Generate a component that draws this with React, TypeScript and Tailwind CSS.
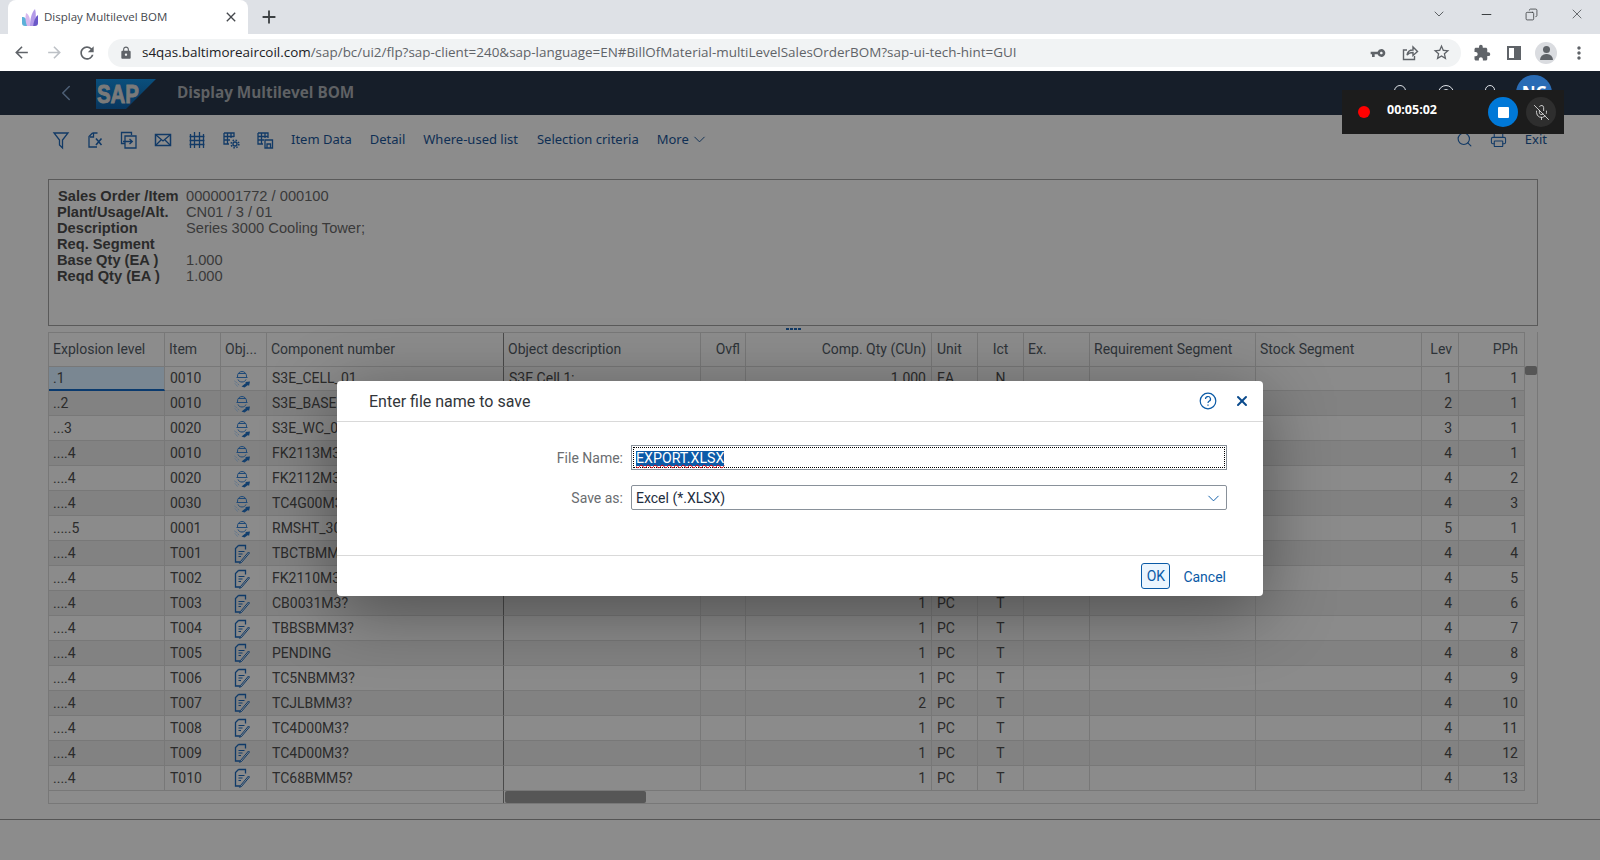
import React from "react";
import { MdArrowBack, MdArrowForward, MdRefresh, MdLock, MdVpnKey, MdExtension, MdStarBorder, MdMoreVert, MdClose, MdAdd } from "react-icons/md";
import { ChevronDown, ChevronLeft, Search, Printer, MicOff, Minus, Copy, X } from "lucide-react";

type Row = {
  level: string;
  item: string;
  kind: "assembly" | "note";
  comp: string;
  desc?: string;
  qty?: string;
  unit?: string;
  ict?: string;
  lev: string;
  pph: string;
};

const rows: Row[] = [
  { level: ".1", item: "0010", kind: "assembly", comp: "S3E_CELL_01", desc: "S3E Cell 1;", qty: "1.000", unit: "EA", ict: "N", lev: "1", pph: "1" },
  { level: "..2", item: "0010", kind: "assembly", comp: "S3E_BASE", lev: "2", pph: "1" },
  { level: "...3", item: "0020", kind: "assembly", comp: "S3E_WC_0", lev: "3", pph: "1" },
  { level: "....4", item: "0010", kind: "assembly", comp: "FK2113M3", lev: "4", pph: "1" },
  { level: "....4", item: "0020", kind: "assembly", comp: "FK2112M3", lev: "4", pph: "2" },
  { level: "....4", item: "0030", kind: "assembly", comp: "TC4G00M3", lev: "4", pph: "3" },
  { level: ".....5", item: "0001", kind: "assembly", comp: "RMSHT_30", lev: "5", pph: "1" },
  { level: "....4", item: "T001", kind: "note", comp: "TBCTBMM3", lev: "4", pph: "4" },
  { level: "....4", item: "T002", kind: "note", comp: "FK2110M3", lev: "4", pph: "5" },
  { level: "....4", item: "T003", kind: "note", comp: "CB0031M3?", qty: "1", unit: "PC", ict: "T", lev: "4", pph: "6" },
  { level: "....4", item: "T004", kind: "note", comp: "TBBSBMM3?", qty: "1", unit: "PC", ict: "T", lev: "4", pph: "7" },
  { level: "....4", item: "T005", kind: "note", comp: "PENDING", qty: "1", unit: "PC", ict: "T", lev: "4", pph: "8" },
  { level: "....4", item: "T006", kind: "note", comp: "TC5NBMM3?", qty: "1", unit: "PC", ict: "T", lev: "4", pph: "9" },
  { level: "....4", item: "T007", kind: "note", comp: "TCJLBMM3?", qty: "2", unit: "PC", ict: "T", lev: "4", pph: "10" },
  { level: "....4", item: "T008", kind: "note", comp: "TC4D00M3?", qty: "1", unit: "PC", ict: "T", lev: "4", pph: "11" },
  { level: "....4", item: "T009", kind: "note", comp: "TC4D00M3?", qty: "1", unit: "PC", ict: "T", lev: "4", pph: "12" },
  { level: "....4", item: "T010", kind: "note", comp: "TC68BMM5?", qty: "1", unit: "PC", ict: "T", lev: "4", pph: "13" },
];

const headers = [
  { label: "Explosion level", cls: "pl-[4px]" },
  { label: "Item", cls: "pl-[4px]" },
  { label: "Obj...", cls: "pl-[4px]" },
  { label: "Component number", cls: "pl-[4px] border-r-[#4a4a4a]" },
  { label: "Object description", cls: "pl-[4px]" },
  { label: "Ovfl", cls: "justify-end pr-[5px]" },
  { label: "Comp. Qty (CUn)", cls: "justify-end pr-[5px]" },
  { label: "Unit", cls: "pl-[5px]" },
  { label: "Ict", cls: "justify-center" },
  { label: "Ex.", cls: "pl-[4px]" },
  { label: "Requirement Segment", cls: "pl-[4px]" },
  { label: "Stock Segment", cls: "pl-[4px]" },
  { label: "Lev", cls: "justify-end pr-[6px]" },
  { label: "PPh", cls: "justify-end pr-[6px]" },
];

const gridCols = "grid grid-cols-[116px_56px_46px_237px_197px_45px_186px_46px_46px_66px_166px_166px_37px_66px]";
const cellBase = "flex items-center overflow-hidden whitespace-nowrap border-r border-b border-[#787878] pt-[1px]";

// helmet over a gear, with a small arrow at the lower right
const AssemblyIcon = () => (
  <svg width="18" height="18" viewBox="0 0 18 18" fill="none" stroke="#1f4a78" strokeWidth="1">
    <path d="M4.500 7.500V6a4.500 4.500 0 0 1 9 0v1.500" />
    <path d="M3.500 7.500h11M5 3.500h8" />
    <path d="M5 9.500c.5 1.500 2 2.500 4 2.500s3.500-1 4-2.500" />
    <path d="M1.500 11l2.500 1.800 2.500 3M2 13.500l2.500 3" stroke="#54708e" strokeDasharray="1.400 1" />
    <path d="M8.500 16.500l4.500-3.500-.8-1 4.800-.5-1 4.500-1-1-3.500 2.500z" fill="#123f6e" stroke="none" />
  </svg>
);

const NoteIcon = () => (
  <svg width="16" height="20" viewBox="0 0 16 20" fill="none" stroke="#0f3a68" strokeWidth="1.300">
    <path d="M4.500 1.500h7v4M4.500 1.500L1.500 4.500v13.500h6" />
    <path d="M4.500 7.500h6M4.500 10h4M4.500 12.500h2.500" strokeWidth="1" />
    <path d="M6.500 17.500l8-9.500 1 1-8 9.500-2 .8z" strokeWidth="1" fill="#8c8c8c" />
  </svg>
);

const ShareIcon = () => (
  <svg width="18" height="18" viewBox="0 0 18 18" fill="none" stroke="#5f6368" strokeWidth="1.400">
    <path d="M6 6H2.500v9.500h11V12" />
    <path d="M6 11c.5-3.500 3-5 6-5V3l4.500 4.500L12 11.500V8.500c-2.500 0-4.500.5-6 2.500z" />
  </svg>
);

const Favicon = () => (
  <svg width="16" height="17" viewBox="0 0 16 17">
    <path d="M0 8c3 0 5 2 5 5v4H3a3 3 0 0 1-3-3z" fill="#5cb0d8" />
    <path d="M4 4c3 1.500 4.500 5 4 13H5c-1.500-4-2-8-1-13z" fill="#d7b8ee" />
    <path d="M13 0c1.500 5 1 12-2 17H8c0-7 1.500-13 5-17z" fill="#b39ae8" />
    <path d="M16 6v8a3 3 0 0 1-3 3h-2c1-5 2-9 5-11z" fill="#6a58c8" />
  </svg>
);

const SapLogo = () => (
  <svg width="60" height="30" viewBox="0 0 60 30">
    <defs>
      <linearGradient id="sapBlue" x1="0" y1="0" x2="0" y2="1">
        <stop offset="0" stopColor="#0a4f7c" />
        <stop offset="1" stopColor="#08365e" />
      </linearGradient>
    </defs>
    <polygon points="0,0 60,0 30,30 0,30" fill="url(#sapBlue)" />
    <text x="1" y="24" fontFamily="Liberation Sans, sans-serif" fontWeight="700" fontSize="26" textLength="42" lengthAdjust="spacingAndGlyphs" fill="#7a7a7a" stroke="#7a7a7a" strokeWidth="1">SAP</text>
  </svg>
);

const toolIcon = { width: 20, height: 20, viewBox: "0 0 20 20", fill: "none", stroke: "#123a66", strokeWidth: 1.300 };

const toolbarIcons = [
  <svg key="filter" {...toolIcon}><path d="M3 3h14l-5.500 7v8l-3-3v-5z" /></svg>,
  <svg key="excel" {...toolIcon}><path d="M7.500 3h5M7.500 3L4 6.500V17h8M5 7h3.500V3.500" /><path d="M11 8.500l5.500 6.500M16.500 8.500L11 15" strokeWidth="1.600" /></svg>,
  <svg key="local" {...toolIcon}><path d="M12.500 5V2.500H2.500v11H6" /><path d="M6 6h11v12H6z" /><path d="M4 11.500h9M10.500 9l2.800 2.500-2.800 2.500" /></svg>,
  <svg key="mail" {...toolIcon}><rect x="2.500" y="4.500" width="15" height="11" strokeWidth="1.500" /><path d="M3 5l7 6 7-6M3 15l5.500-5.500M17 15l-5.500-5.500" /></svg>,
  <svg key="grid" {...toolIcon}><path d="M3.500 4v14M7.500 2v16M12.500 2v16M16.500 4v14M2.500 6.500h15M2.500 10.500h15M2.500 14.500h15" /></svg>,
  <svg key="gridgear" {...toolIcon}><path d="M3 3h10v4M3 3v11h5M3 6.500h10M3 10h6M6.500 3v11M10 3v5" /><circle cx="14" cy="14" r="2" /><circle cx="14" cy="14" r="3.800" strokeDasharray="1.500 1.500" strokeWidth="1.600" /></svg>,
  <svg key="gridsave" {...toolIcon}><path d="M3 3h10v5M3 3v11h5M3 6.500h10M3 10h6M6.500 3v11M10 3v5" /><path d="M10 10h7.500v8H10zM12 14h3.500v4H12z" /></svg>,
];

const Cell = ({ className, children }: { className?: string; children?: React.ReactNode }) => (
  <div className={`${cellBase} ${className ?? ""}`}>{children}</div>
);

const BrowserChrome = () => (
  <div className="font-['Open_Sans',sans-serif]">
    <div className="flex h-[34px] items-end bg-[#dee1e6] pl-[8px]">
      <div className="flex h-[34px] w-[240px] items-center rounded-t-[8px] bg-white pl-[14px] pr-[9px] text-[11.5px] text-[#45484d]">
        <Favicon />
        <span className="ml-[6px] flex-1 whitespace-nowrap">Display Multilevel BOM</span>
        <MdClose className="text-[#45484d]" size={16} />
      </div>
      <div className="flex h-[34px] w-[42px] items-center justify-center">
        <MdAdd className="text-[#3c4043]" size={22} />
      </div>
      <div className="flex h-[28px] flex-1 items-center justify-end self-start pr-[15px] text-[#3c4043]">
        <ChevronDown size={16} strokeWidth={1.2} className="mr-[32px]" />
        <Minus size={15} strokeWidth={1.6} className="mr-[31px]" />
        <Copy size={13} strokeWidth={1.5} className="mr-[31px] -scale-x-100" />
        <X size={16} strokeWidth={1.1} />
      </div>
    </div>
    <div className="flex h-[37px] items-center bg-white">
      <div className="flex w-[108px] items-center text-[#5f6368]">
        <MdArrowBack size={19} className="ml-[12px]" />
        <MdArrowForward size={19} className="ml-[14px] text-[#bdc1c6]" />
        <MdRefresh size={20} className="ml-[13px]" />
      </div>
      <div className="flex h-[28px] w-[1353px] items-center rounded-full bg-[#f1f3f4] pl-[11px] pr-[10px] text-[13.44px] text-[#5f6368]">
        <MdLock size={14} />
        <span className="ml-[9px] flex-1 whitespace-nowrap">
          <span className="text-[#202124]">s4qas.baltimoreaircoil.com</span>/sap/bc/ui2/flp?sap-client=240&amp;sap-language=EN#BillOfMaterial-multiLevelSalesOrderBOM?sap-ui-tech-hint=GUI
        </span>
        <MdVpnKey size={16} className="-scale-x-100" />
        <span className="ml-[15px] flex"><ShareIcon /></span>
        <MdStarBorder size={19} className="ml-[13px]" />
      </div>
      <MdExtension size={18} className="ml-[12px] text-[#5f6368]" />
      <div className="ml-[16px] h-[14px] w-[14px] border-y-2 border-l-[2px] border-r-[7px] border-[#5f6368]" />
      <div className="ml-[14px] flex h-[22px] w-[22px] items-center justify-center overflow-hidden rounded-full bg-[#dadce0]">
        <div className="relative h-[14px] w-[14px]">
          <div className="mx-auto h-[7px] w-[7px] rounded-full bg-[#5f6368]" />
          <div className="mx-auto mt-[1px] h-[6px] w-[13px] rounded-t-[6px] bg-[#5f6368]" />
        </div>
      </div>
      <MdMoreVert size={20} className="ml-[12px] text-[#5f6368]" />
    </div>
  </div>
);

const ShellBar = () => (
  <div className="flex h-[44px] items-center bg-[#161e29]">
    <ChevronLeft size={26} strokeWidth={1.4} className="ml-[53px] text-[#4d5f75]" />
    <div className="ml-[17px] mt-[1px] flex"><SapLogo /></div>
    <span className="mb-[2px] ml-[21px] font-['Open_Sans',sans-serif] text-[15.3px] font-bold text-[#5f6164]">Display Multilevel BOM</span>
    <div className="ml-auto mr-[48px] flex items-center">
      <div className="mr-[32px] h-[16px] w-[12px] rounded-full border-[1.5px] border-[#dfe3e8]" />
      <div className="mr-[31px] flex h-[16px] w-[16px] items-center justify-center rounded-full border-[1.5px] border-[#dfe3e8]">
        <div className="h-[8px] w-[8px] rounded-full border border-[#dfe3e8]" />
      </div>
      <div className="mr-[21px] h-[16px] w-[10px] rounded-t-full border-[1.5px] border-[#dfe3e8]" />
      <div className="flex h-[36px] w-[36px] items-center justify-center rounded-full bg-[#2a6cb5] text-[17px] font-bold text-white">NC</div>
    </div>
  </div>
);

const Toolbar = () => (
  <div className="flex h-[48px] items-center pl-[51px] pr-[53px] pt-[1px] font-['Noto_Sans',sans-serif] text-[13px] text-[#0f2f54]">
    <div className="flex w-[240px] items-center gap-[14px]">{toolbarIcons}</div>
    <span>Item Data</span>
    <span className="ml-[18px]">Detail</span>
    <span className="ml-[18px]">Where-used list</span>
    <span className="ml-[19px]">Selection criteria</span>
    <span className="ml-[18px]">More</span>
    <ChevronDown size={19} strokeWidth={1.2} className="ml-[1px]" />
    <div className="ml-auto flex items-center text-[#123a66]">
      <Search size={17} strokeWidth={1.6} />
      <Printer size={17} strokeWidth={1.5} className="ml-[17px]" />
      <span className="ml-[18px] text-[#0f2f54]">Exit</span>
    </div>
  </div>
);

const SummaryBox = () => (
  <div className="mt-[16px] h-[147px] border border-[#5a5a5a] pl-[8px] pt-[8px] font-['Liberation_Sans',sans-serif] text-[14.67px] leading-[16px] text-[#2a2a2a]">
    {[
      ["Sales Order /Item", "0000001772 / 000100"],
      ["Plant/Usage/Alt.", "CN01 / 3 / 01"],
      ["Description", "Series 3000 Cooling Tower;"],
      ["Req. Segment", ""],
      ["Base Qty (EA )", "1.000"],
      ["Reqd Qty (EA )", "1.000"],
    ].map(([label, value], i) => (
      <div key={label} className="flex">
        <span className={i === 0 ? "w-[129px] pl-[1px] font-bold" : "w-[129px] font-bold"}>{label}</span>
        <span className="text-[#3a3a3a]">{value}</span>
      </div>
    ))}
  </div>
);

const BomTable = () => (
  <div className="flex font-['Roboto',sans-serif] text-[14px] text-[#2b2b2b]">
    <div className="w-[1477px] border-l border-[#787878]">
      <div className={`${gridCols} h-[34.5px] border-t border-[#787878] text-[#2e3338]`}>
        {headers.map((h) => (
          <Cell key={h.label} className={`pb-[1px] ${h.cls}`}>{h.label}</Cell>
        ))}
      </div>
      {rows.map((r, i) => (
        <div key={i} className={`${gridCols} h-[24.96px] ${i % 2 === 0 ? "bg-[#8b8b8b]" : "bg-[#828282]"}`}>
          <Cell className={i === 0 ? "border-b-2 border-b-[#0a3a6e] bg-[#7a8792] pl-[4px]" : "pl-[4px]"}>{r.level}</Cell>
          <Cell className="pl-[5px]">{r.item}</Cell>
          <Cell className="justify-center pr-[3px]">{r.kind === "assembly" ? <AssemblyIcon /> : <NoteIcon />}</Cell>
          <Cell className="border-r-[#4a4a4a] pl-[5px]">{r.comp}</Cell>
          <Cell className="pl-[5px]">{r.desc}</Cell>
          <Cell />
          <Cell className="justify-end pr-[5px]">{r.qty}</Cell>
          <Cell className="pl-[5px]">{r.unit}</Cell>
          <Cell className="justify-center">{r.ict}</Cell>
          <Cell />
          <Cell />
          <Cell />
          <Cell className="justify-end pr-[6px]">{r.lev}</Cell>
          <Cell className="justify-end pr-[6px]">{r.pph}</Cell>
        </div>
      ))}
      <div className="flex h-[13px] border-b border-[#787878]">
        <div className="w-[455px] border-r border-[#4a4a4a]" />
        <div className="ml-[1px] h-[12px] w-[141px] rounded-[2px] bg-[#565656]" />
      </div>
    </div>
    <div className="w-[13px] border-r border-b border-[#787878]">
      <div className="mt-[34px] h-[9px] rounded-[2px] bg-[#565656]" />
    </div>
  </div>
);

const SaveDialog = () => (
  <div className="absolute left-[337px] top-[381px] flex h-[215px] w-[926px] flex-col rounded-[4px] bg-white font-['Roboto',sans-serif] shadow-[0_15px_70px_rgba(0,0,0,0.4)]">
    <div className="flex h-[41px] items-center border-b border-[#d9d9d9] pl-[32px] pr-[13px]">
      <span className="flex-1 pt-[1px] text-[16px] text-[#32363a]">Enter file name to save</span>
      <svg width="18" height="18" viewBox="0 0 18 18" fill="none" stroke="#0a5aa6" strokeWidth="1.200">
        <circle cx="9" cy="9" r="7.800" />
        <path d="M6.500 7a2.500 2.500 0 1 1 3.500 2.300c-.7.4-1 .8-1 1.700" />
        <path d="M9 12.500v1.300" />
      </svg>
      <X size={16} strokeWidth={3} className="ml-[17px] text-[#0a4a8c]" />
    </div>
    <div className="flex flex-1 flex-col gap-[15px] pt-[23px] text-[14px]">
      <div className="flex items-center">
        <span className="w-[286px] pt-[2px] text-right text-[#6a6d70]">File Name:</span>
        <div className="ml-[8px] flex h-[25px] w-[596px] items-center border border-[#89919a] p-[1px]">
          <div className="flex h-full w-full items-center border border-dotted border-black pl-[2px] pt-[1px] text-[14.2px]">
            <span className="bg-[#0b5aa8] leading-[15px] text-white underline decoration-red-600 decoration-wavy decoration-1">EXPORT.XLSX</span>
          </div>
        </div>
      </div>
      <div className="flex items-center">
        <span className="w-[286px] pt-[1px] text-right text-[#6a6d70]">Save as:</span>
        <div className="ml-[8px] flex h-[25px] w-[596px] items-center justify-between rounded-[2px] border border-[#89919a] pl-[4px] pr-[3px] pt-[1px] text-[14px] text-[#1d2d3e]">
          <span>Excel (*.XLSX)</span>
          <ChevronDown size={19} strokeWidth={1.2} className="text-[#0a5aa6]" />
        </div>
      </div>
    </div>
    <div className="flex h-[41px] items-center justify-end border-t border-[#d9d9d9] pr-[37px] text-[14px] text-[#0a5aa6]">
      <div className="flex h-[26px] w-[29px] items-center justify-center rounded-[3px] border border-[#0a5aa6] bg-[#ebf5fe] pt-[1px]">OK</div>
      <span className="ml-[13px] pt-[3px]">Cancel</span>
    </div>
  </div>
);

const RecorderBar = () => (
  <div className="absolute left-[1342px] top-[90px] flex h-[44px] w-[222px] items-center bg-[#1c1c1c] pl-[16px]">
    <div className="h-[12px] w-[12px] rounded-full bg-[#ff0000]" />
    <span className="ml-[17px] w-[101px] pb-[4px] font-['Open_Sans',sans-serif] text-[12.5px] font-bold text-white">00:05:02</span>
    <div className="flex h-[30px] w-[30px] items-center justify-center rounded-full bg-[#0078d7]">
      <div className="h-[11px] w-[11px] rounded-[1px] bg-white" />
    </div>
    <div className="ml-[8px] flex h-[30px] w-[30px] items-center justify-center rounded-full bg-[#2e2e2e]">
      <MicOff size={17} strokeWidth={1.2} className="text-[#e6e6e6]" />
    </div>
  </div>
);

const App = () => {
  return (
    <div className="relative flex h-[860px] w-[1600px] flex-col overflow-hidden bg-[#8c8c8c]">
      <BrowserChrome />
      <ShellBar />
      <Toolbar />
      <div className="pl-[48px] pr-[62px]">
        <SummaryBox />
        <div className="flex h-[6px] items-center justify-center gap-[1px]">
          <div className="h-[2px] w-[3px] bg-[#123a66]" />
          <div className="h-[2px] w-[3px] bg-[#123a66]" />
          <div className="h-[2px] w-[3px] bg-[#123a66]" />
          <div className="h-[2px] w-[3px] bg-[#123a66]" />
        </div>
        <BomTable />
      </div>
      <div className="mt-[15.5px] h-[1px] bg-[#555555]" />
      <SaveDialog />
      <RecorderBar />
    </div>
  );
};

export default App;
